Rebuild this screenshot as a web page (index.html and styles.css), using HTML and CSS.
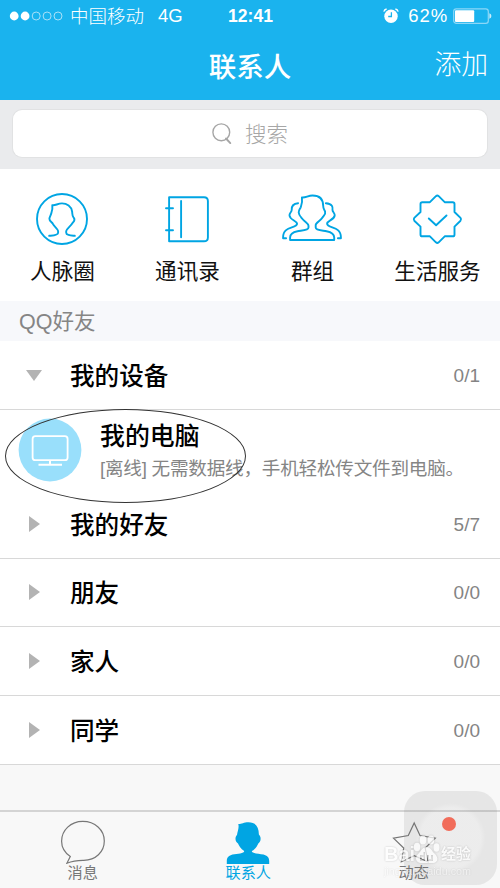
FILE: index.html
```html
<!DOCTYPE html>
<html lang="zh-CN">
<head>
<meta charset="utf-8">
<title>联系人</title>
<link rel="stylesheet" href="styles.css">
</head>
<body>
<div class="app">
  <header class="top">
    <div class="status">
      <div class="status-left">
        <svg class="signal" width="54" height="10" viewBox="0 0 54 10"><g fill="#fff"><circle cx="5.2" cy="5" r="4.4"/><circle cx="16.1" cy="5" r="4.4"/></g><g fill="none" stroke="#a9e1f8" stroke-width="1"><circle cx="27.2" cy="5" r="4"/><circle cx="38.1" cy="5" r="4"/><circle cx="49" cy="5" r="4"/></g></svg>
        <span class="carrier">中国移动</span>
        <span class="network">4G</span>
      </div>
      <span class="clock">12:41</span>
      <div class="status-right">
        <svg class="alarm" width="16" height="16" viewBox="0 0 16 16"><circle cx="8" cy="8.3" r="6.7" fill="#fff"/><path d="M.8 3.6Q1.4 1.6 3.6 1M15.2 3.6Q14.6 1.6 12.4 1" fill="none" stroke="#fff" stroke-width="1.3"/><path d="M8.4 4.3v4.2H5.2" fill="none" stroke="#1ab3ee" stroke-width="1.3"/></svg>
        <span class="percent">62%</span>
        <svg class="battery" width="39" height="16" viewBox="0 0 39 16"><rect x=".7" y=".9" width="34.6" height="14.4" rx="2.6" fill="none" stroke="#8cd7f7" stroke-width="1.2"/><rect x="2" y="2.2" width="19.2" height="11.8" rx="1" fill="#fff"/><path d="M36.4 5.2q2 .8 2 2.8t-2 2.8z" fill="#c9ecfb"/></svg>
      </div>
    </div>
    <div class="nav">
      <h1 class="title">联系人</h1>
      <span class="add">添加</span>
    </div>
  </header>

  <div class="search-bar">
    <div class="search-box">
      <svg width="21" height="22" viewBox="0 0 21 22" fill="none" stroke="#a6a6a6" stroke-linecap="round"><circle cx="9.3" cy="9.3" r="8.4" stroke-width="1.4"/><path d="M14 15.5l4.3 4.6" stroke-width="1.9"/></svg>
      <span>搜索</span>
    </div>
  </div>

  <nav class="shortcuts">
    <div class="shortcut">
      <svg class="line-icon" viewBox="32.5 190 60 56"><circle cx="62.5" cy="219" r="25"/><path d="M49.7 235.8C54 235.4 58.6 235.3 58.6 232.7V231C58.6 229.3 54.5 226.5 53.2 223.6C52.4 222.3 49.8 221 49.9 218.7C50 216.8 51.6 215 52 212.5C52.8 210 53.2 208 52.8 205.2C56 205.8 58 203.4 62.5 203.4C67.5 203.4 71.8 206.6 72.6 211.5C73 214 72.5 215.5 74 217.4C76 219.7 74.7 221.3 73.2 222.7C71 226.5 66.7 229 66.7 231V232.7C66.7 235.3 71 235.4 75.3 235.8"/></svg>
      <span>人脉圈</span>
    </div>
    <div class="shortcut">
      <svg class="line-icon" viewBox="157.5 190 60 56"><path d="M169.6 197.2H204.5Q208.4 197.2 208.4 201V237.5Q208.4 241.3 204.5 241.3H169.6ZM181.6 201V237.3M166.5 208.3H173.5M166.5 230.2H173.5"/></svg>
      <span>通讯录</span>
    </div>
    <div class="shortcut">
      <svg class="line-icon" viewBox="282.5 190 60 56"><path d="M290.6 240H334.7V237.5C334.7 233.5 331 232 327 231.2C322.5 230.4 316.2 230.5 316.2 227.5V225C316.2 222.8 321.2 220.5 323 217.5C324 215.8 326.5 214.5 325.6 211.6C325 209.8 323.7 209 323.7 206C323.7 199.5 320 195.5 313 195.5C308.5 195.5 306 198 302.4 197.4C303.2 202.5 301.9 205.2 301.2 207.3C300.5 209 299.1 210.2 299.2 212.5C299.3 215.3 301.6 217.3 303 219C305.5 222 309 223.5 309 225.7V227.5C309 230.5 302.8 230.4 298 231.2C294 232 290.6 233.5 290.6 237.5Z"/><path d="M298.6 203.2C292.5 203.7 292 207.2 292.2 210C292 212.3 289.7 213 290 215.5C290.5 220.3 297.6 220.5 297.6 223.8C297.6 227 290 227.2 286.6 230.1C283.2 233 283.6 235.5 283.6 238.2H286.6M326.4 203.2C333 203.7 333.5 207.2 333 210C333 212.3 335.6 213 335.2 215.5C334.5 220.3 327.6 220.5 327.6 223.8C327.6 227 335 227.2 338.4 230.1C341.8 233 341.4 235.5 341.4 238.2H338.4"/></svg>
      <span>群组</span>
    </div>
    <div class="shortcut">
      <svg class="line-icon" viewBox="407.5 190 60 56"><path d="M436.4 196.2Q437.8 195 439.2 196.2L445.2 202.2H453.2Q455 202.2 455 204V212L461 217.9Q462.2 219.3 461 220.7L455 226.6V234.4Q455 236.3 453.2 236.3H445.2L439.2 242.3Q437.8 243.5 436.4 242.3L430.4 236.3H422.8Q421 236.3 421 234.4V226.6L414.8 220.7Q413.6 219.3 414.8 217.9L421 212V204Q421 202.2 422.8 202.2H430.4ZM429.3 218.5L436.6 225.3L447 215.5"/></svg>
      <span>生活服务</span>
    </div>
  </nav>

  <div class="section-title">QQ好友</div>

  <main class="groups">
    <div class="group"><i class="arrow open"></i><span class="name">我的设备</span><span class="count">0/1</span></div>
    <div class="device">
      <svg class="avatar" width="64" height="64" viewBox="0 0 64 64"><circle cx="32" cy="32" r="31.4" fill="#99dffb"/><rect x="14.6" y="18.2" width="35" height="24" rx="2.8" fill="none" stroke="#fff" stroke-width="1.8"/><path d="M32 42.5V46.6M20.5 46.8H44" fill="none" stroke="#fff" stroke-width="2"/></svg>
      <div class="device-text">
        <span class="name">我的电脑</span>
        <span class="note">[离线] 无需数据线，手机轻松传文件到电脑。</span>
      </div>
      <div class="highlight"></div>
    </div>
    <div class="group"><i class="arrow"></i><span class="name">我的好友</span><span class="count">5/7</span></div>
    <div class="group"><i class="arrow"></i><span class="name">朋友</span><span class="count">0/0</span></div>
    <div class="group"><i class="arrow"></i><span class="name">家人</span><span class="count">0/0</span></div>
    <div class="group"><i class="arrow"></i><span class="name">同学</span><span class="count">0/0</span></div>
  </main>

  <footer class="tabs">
    <div class="tab">
      <svg viewBox="58 816 50 48" fill="none" stroke="#777" stroke-width="1.2"><path d="M66.9 863.2L70.3 856.5C64.5 852.5 61.6 847 61.6 841.2C61.6 830.2 70.8 821.4 82.8 821.4C94.8 821.4 104.3 829.8 104.3 841C104.3 852 95.5 860.3 83.8 860.3C77 860.2 72.2 861 66.9 863.2Z"/></svg>
      <span>消息</span>
    </div>
    <div class="tab active">
      <svg viewBox="223.5 816 50 48" fill="#00a5e3"><path d="M227.3 864V861C227.3 857.5 229.5 855.5 233 854.6C238 853.5 244.7 853.7 244.7 851C241.2 849 239.5 845.5 238.5 843.4C235.8 842 235 837.5 237.5 835C238 831 239.8 828 238.8 824C242 824.2 244 822.2 249 822.2C256 822.2 259.3 826.5 259.4 834.5C262 837 261.5 841.5 258.8 843.4C257.7 846 255.5 849.5 252.3 851C252.3 853.7 259 853.5 264 854.6C267.5 855.5 269.7 857.5 269.7 861V864Z"/></svg>
      <span>联系人</span>
    </div>
    <div class="tab">
      <svg viewBox="389 816 50 48" fill="none" stroke="#777" stroke-width="1.2"><path d="M414.2 823L420 835.5L435.3 838.1L425.2 848L428 861.7L414.2 855.7L401.3 861.7L403.7 848L393.5 838.1L408.3 835.5Z"/></svg>
      <span>动态</span>
    </div>
  </footer>

  <div class="assist"><i class="dot"></i></div>
  <div class="watermark">
    <div class="wm-brand"><b class="wm-latin">Bai</b><svg width="27" height="29" viewBox="0 0 27 29" fill="#fff"><ellipse cx="4" cy="12" rx="3.2" ry="4.3"/><ellipse cx="10" cy="5" rx="3.3" ry="4.5"/><ellipse cx="18" cy="5" rx="3.3" ry="4.5"/><ellipse cx="23.5" cy="12.5" rx="3" ry="4.2"/><path fill-rule="evenodd" d="M13.5 12C9 12 8.5 16 5.5 18.5C1 22.5 3 28 8 28H20C25 28 26 22.5 21.5 18.5C18.5 16 18 12 13.5 12ZM10.5 17H12V26H7V20H10.5ZM9 22V24H10.5V22ZM14 20H16V24H18V20H20V26H14Z"/></svg><b class="wm-cjk">经验</b></div>
    <span class="wm-url">jingyan.baidu.com</span>
  </div>
</div>
</body>
</html>
```

FILE: styles.css
```css
* { box-sizing: border-box; }
body {
  margin: 0;
  background: #f8f8f8;
  font-family: "Liberation Sans", "Noto Sans CJK SC", sans-serif;
}
.app {
  position: relative;
  width: 500px;
  height: 888px;
  overflow: hidden;
  display: flex;
  flex-direction: column;
}
svg { display: block; flex: none; }

.top { height: 100px; background: #1ab3ee; color: #fff; flex: none; }
.status {
  height: 32px;
  display: grid;
  grid-template-columns: 1fr auto 1fr;
  align-items: center;
  padding: 0 8px 0 9px;
  line-height: 32px;
}
.status-left, .status-right { display: flex; align-items: center; }
.status-right { justify-content: flex-end; }
.carrier { margin-left: 7px; padding-top: 1px; font-size: 18.5px; font-weight: 300; line-height: 31px; }
.network { margin-left: 14px; font-size: 18.5px; }
.clock { font-size: 17.5px; font-weight: 700; }
.percent { margin: 0 5px 0 9px; font-size: 18.5px; letter-spacing: .9px; }
.nav {
  height: 68px;
  display: grid;
  grid-template-columns: 1fr auto 1fr;
  align-items: center;
  padding-right: 12px;
  padding-left: 12px;
}
.title { grid-column: 2; margin: 0; padding-top: 3px; font-size: 27.5px; font-weight: 500; line-height: 65px; }
.add { justify-self: end; font-size: 26.8px; font-weight: 300; line-height: 66px; padding-bottom: 2px; }

.search-bar { height: 69px; background: #eaebed; padding: 10px 13px 12px; flex: none; }
.search-box {
  height: 47px;
  display: flex;
  align-items: center;
  justify-content: center;
  gap: 12px;
  background: #fff;
  border-radius: 9px;
  box-shadow: 0 0 0 1px #e1e2e3;
  color: #a6a6a6;
  font-size: 21.5px;
  font-weight: 300;
}
.search-box span { padding-bottom: 2px; }

.shortcuts { height: 132px; display: grid; grid-template-columns: repeat(4, 125px); background: #fff; flex: none; }
.shortcut { display: flex; flex-direction: column; align-items: center; padding-top: 21px; font-size: 21.6px; color: #111; }
.shortcut span { line-height: 32px; margin-top: 10px; white-space: nowrap; }
.line-icon { width: 60px; height: 56px; fill: none; stroke: #00a5e3; stroke-width: 1.9; stroke-linecap: round; stroke-linejoin: round; }
.shortcut .line-icon { margin-right: 1px; }

.section-title { height: 40px; flex: none; background: #f7f8fb; padding-left: 19px; font-size: 21.5px; line-height: 42px; color: #858585; }

.groups { background: #fff; flex: none; }
.group {
  height: 68.7px;
  display: grid;
  grid-template-columns: 70px 1fr auto;
  align-items: center;
  padding-right: 20px;
  border-bottom: 1px solid #d8d8d8;
}
.name { font-size: 24.6px; font-weight: 500; color: #000; line-height: 34px; }
.group .name { padding-top: 4px; }
.count { padding-top: 2px; font-size: 19px; color: #848484; }
.arrow { margin-left: 29px; width: 0; height: 0; border-left: 11px solid #b3b3b3; border-top: 8px solid transparent; border-bottom: 8px solid transparent; }
.arrow.open { margin-left: 26px; margin-top: 1px; border-top: 11px solid #b3b3b3; border-bottom: 0; border-left: 8px solid transparent; border-right: 8px solid transparent; }
.device { position: relative; height: 80.2px; display: flex; padding: 8px 0 0 18px; }
.device-text { margin-left: 18px; padding-top: 1px; display: flex; flex-direction: column; }
.device-text .name { font-size: 24.9px; }
.note { font-size: 18.6px; letter-spacing: -.22px; line-height: 30px; margin-top: 1px; color: #858585; white-space: nowrap; }
.highlight { position: absolute; left: 5px; top: -1px; width: 241px; height: 94px; border: 1px solid #333; border-radius: 50%; z-index: 1; }

.tabs { height: 78px; margin-top: auto; flex: none; display: grid; grid-template-columns: repeat(3, 165.5px); border-top: 2px solid #d4d4d4; background: #f8f8f8; }
.tab { display: flex; flex-direction: column; align-items: center; padding-top: 4px; font-size: 15.2px; color: #777; }
.tab svg { width: 50px; height: 48px; }
.tab span { line-height: 18px; }
.tab.active { color: #00a5e3; }

.assist { position: absolute; left: 403.5px; top: 791px; width: 93px; height: 94px; border-radius: 21px; background: radial-gradient(circle, rgba(120,120,120,.09) 0 30px, rgba(100,100,100,.12) 35px); }
.dot { position: absolute; left: 38px; top: 26px; width: 14px; height: 14px; border-radius: 50%; background: #f16c5a; }
.watermark { position: absolute; left: 384px; top: 834px; width: 95px; color: #fff; opacity: .72; text-shadow: 0 0 2px rgba(0,0,0,.3); }
.wm-brand { display: flex; align-items: flex-end; height: 30px; }
.wm-brand svg { filter: drop-shadow(0 0 1px rgba(0,0,0,.25)); }
.wm-latin { width: 29px; font-size: 20px; line-height: 19px; }
.wm-cjk { margin-left: 1px; font-size: 15px; line-height: 21px; }
.wm-url { display: block; font-size: 10.8px; line-height: 14px; opacity: .6; }
```
